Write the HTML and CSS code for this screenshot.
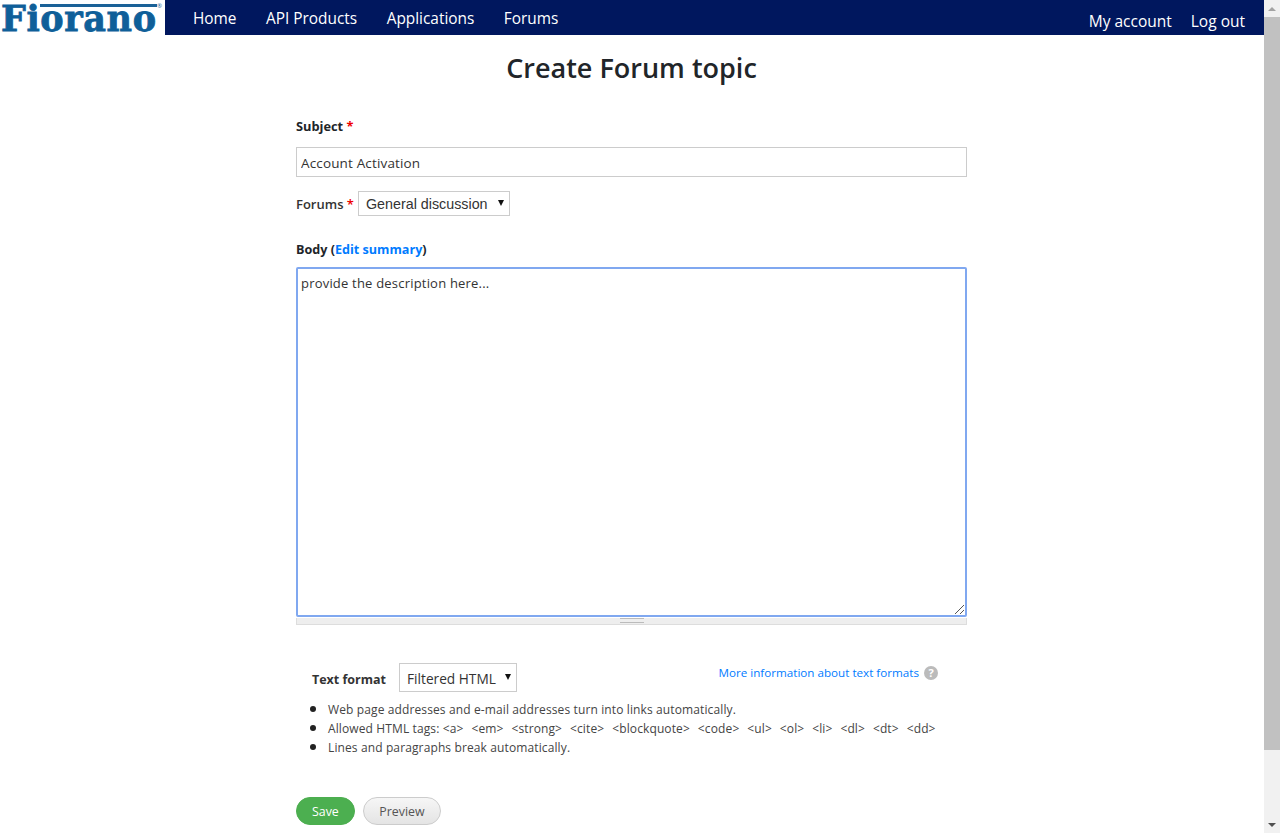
FILE: index.html
```html
<!DOCTYPE html>
<html lang="en">
<head>
  <meta charset="UTF-8" />
  <title>Create Forum topic</title>
  <link rel="stylesheet" href="styles.css">
</head>
<body>
  <div class="page">
    <header class="topbar">
      <a class="logo" href="#">
        <span class="logo-rule"></span>
        <span class="logo-text">Fiorano</span>
        <span class="logo-mark">®</span>
      </a>
      <nav class="main-nav">
        <a href="#">Home</a>
        <a href="#">API Products</a>
        <a href="#">Applications</a>
        <a href="#">Forums</a>
      </nav>
      <nav class="user-nav">
        <a href="#">My account</a>
        <a href="#">Log out</a>
      </nav>
    </header>

    <main class="content">
      <h1>Create Forum topic</h1>
      <form class="topic-form">
        <label class="field-label subject-label" for="subject">Subject <span class="req">*</span></label>
        <input class="text-input" id="subject" type="text" value="Account Activation" />

        <div class="forums-row">
          <label class="forums-label" for="forum">Forums <span class="req">*</span></label>
          <div class="select-box forums-select" id="forum">General discussion<span class="caret"></span></div>
        </div>

        <div class="field-label body-label">Body (<a href="#">Edit summary</a>)</div>
        <div class="body-box">
          <div class="body-text">provide the description here...</div>
          <svg class="resize-corner" width="11" height="11" viewBox="0 0 11 11">
            <path d="M1 10 L10 1 M6 10 L10 6" stroke="#555" stroke-width="1" fill="none" />
          </svg>
        </div>
        <div class="grippie"><span></span></div>

        <div class="format-wrap">
          <div class="format-top">
            <div class="format-pick">
              <span class="format-label">Text format</span>
              <div class="select-box format-select">Filtered HTML<span class="caret"></span></div>
            </div>
            <a class="format-help" href="#">More information about text formats <span class="help-icon">?</span></a>
          </div>
          <ul class="tips">
            <li>Web page addresses and e-mail addresses turn into links automatically.</li>
            <li>Allowed HTML tags: <span class="tag-list">&lt;a&gt; &lt;em&gt; &lt;strong&gt; &lt;cite&gt; &lt;blockquote&gt; &lt;code&gt; &lt;ul&gt; &lt;ol&gt; &lt;li&gt; &lt;dl&gt; &lt;dt&gt; &lt;dd&gt;</span></li>
            <li>Lines and paragraphs break automatically.</li>
          </ul>
        </div>

        <div class="actions">
          <button class="btn btn-save" type="button">Save</button>
          <button class="btn btn-preview" type="button">Preview</button>
        </div>
      </form>
    </main>
  </div>

  <div class="scrollbar">
    <span class="arrow arrow-up"></span>
    <div class="thumb"></div>
    <span class="arrow arrow-down"></span>
  </div>
</body>
</html>
```

FILE: styles.css
```css
html, body {
  height: 100%;
}

body {
  margin: 0;
  display: flex;
  overflow: hidden;
  background: #fff;
  color: #212529;
  font-family: "Open Sans", sans-serif;
  font-size: 13px;
}

a {
  text-decoration: none;
}

.page {
  flex: 1;
  min-width: 0;
}

/* top bar */
.topbar {
  display: flex;
  height: 35px;
  background: #00175e;
}

.logo {
  position: relative;
  display: block;
  width: 165px;
  background: #fff;
}

.logo-rule {
  position: absolute;
  left: 40px;
  top: 4px;
  width: 117px;
  height: 3px;
  background: #1a6197;
}

.logo-text {
  position: absolute;
  left: 1px;
  top: 4px;
  color: #0f5f99;
  font-family: "DejaVu Serif", serif;
  font-size: 35px;
  font-weight: 700;
  line-height: 30px;
  letter-spacing: 0.6px;
  white-space: nowrap;
  -webkit-text-stroke: 0.8px #0f5f99;
}

.logo-mark {
  position: absolute;
  left: 157px;
  top: 2px;
  font-size: 6px;
  color: #1a6197;
}

.main-nav {
  display: flex;
  gap: 29.5px;
  margin-left: 28px;
  padding-top: 7px;
}

.main-nav a,
.user-nav a {
  color: #fff;
  font-size: 15.4px;
  line-height: 24px;
}

.user-nav {
  display: flex;
  gap: 19px;
  margin-left: auto;
  margin-right: 19px;
  padding-top: 9px;
}

.user-nav a {
  font-size: 15.5px;
}

/* form */
.content {
  width: 671px;
  margin-left: 296px;
}

h1 {
  margin: 13px -100px 0;
  text-align: center;
  font-size: 27px;
  font-weight: 600;
  line-height: 40px;
}

.field-label {
  display: block;
  font-weight: 700;
  font-size: 12.8px;
  line-height: 18px;
}

.req {
  color: #e00;
}

.subject-label {
  margin-top: 29px;
}

.text-input {
  display: block;
  box-sizing: border-box;
  width: 100%;
  height: 30px;
  margin-top: 12px;
  padding: 2px 4px 0;
  border: 1px solid #ccc;
  font: 13.5px "Open Sans", sans-serif;
  letter-spacing: 0.15px;
  color: #333;
}

.forums-row {
  display: flex;
  align-items: center;
  margin-top: 14px;
}

.forums-label {
  margin-right: 4px;
  font-weight: 600;
  color: #333;
}

.select-box {
  position: relative;
  box-sizing: border-box;
  border: 1px solid #ccc;
  color: #333;
  white-space: nowrap;
}

.forums-select {
  width: 152px;
  height: 25px;
  padding-left: 7px;
  font-family: "Liberation Sans", sans-serif;
  font-size: 14.3px;
  line-height: 24px;
}

.caret {
  position: absolute;
  top: 8px;
  right: 5px;
  border-left: 3.5px solid transparent;
  border-right: 3.5px solid transparent;
  border-top: 6px solid #111;
}

.body-label {
  margin-top: 25px;
  font-size: 12.6px;
}

.body-label a {
  color: #007bff;
}

.body-box {
  position: relative;
  box-sizing: border-box;
  height: 350px;
  margin-top: 8px;
  padding: 4px 3px;
  border: 2px solid #80a8f0;
  border-radius: 2px;
  line-height: 20px;
  letter-spacing: 0.2px;
  color: #333;
}

.resize-corner {
  position: absolute;
  right: 0;
  bottom: 0;
}

.grippie {
  box-sizing: border-box;
  height: 7px;
  border: 1px solid #ddd;
  border-top: 0;
  background: #eee;
}

.grippie span {
  display: block;
  width: 24px;
  height: 3px;
  margin: 1px auto 0;
  border-top: 1px solid #bbb;
  border-bottom: 1px solid #bbb;
}

.format-wrap {
  margin-top: 38px;
  padding: 0 29px 0 16px;
}

.format-top {
  display: flex;
  justify-content: space-between;
  align-items: flex-start;
}

.format-pick {
  display: flex;
  align-items: center;
  gap: 13px;
}

.format-label {
  padding-top: 3px;
  font-size: 12.5px;
  font-weight: 700;
  color: #333;
}

.format-select {
  width: 118px;
  height: 29px;
  padding-left: 7px;
  font-size: 13.7px;
  line-height: 29px;
}

.format-select .caret {
  top: 10px;
}

.format-help {
  display: flex;
  align-items: center;
  gap: 5px;
  margin-top: 1px;
  color: #007bff;
  font-size: 11.65px;
  line-height: 18px;
}

.help-icon {
  width: 14px;
  height: 14px;
  border-radius: 50%;
  background: #bbb;
  color: #fff;
  font-size: 11px;
  font-weight: 700;
  line-height: 14px;
  text-align: center;
}

.tips {
  margin: 7px 0 0;
  padding-left: 16px;
  font-size: 12px;
  letter-spacing: 0.12px;
  color: #444;
}

.tips li {
  height: 19px;
  line-height: 19px;
}

.tips li::marker {
  font-size: 16px;
  color: #222;
}

.tag-list {
  word-spacing: 4.7px;
}

.actions {
  display: flex;
  gap: 8px;
  margin-top: 41px;
}

.btn {
  height: 28px;
  padding: 0 15px;
  border-radius: 15px;
  font: 12.4px "Open Sans", sans-serif;
  cursor: pointer;
}

.btn-save {
  border: 1px solid #4cae4f;
  background: #4caf50;
  color: #fff;
}

.btn-preview {
  padding: 0 15.5px;
  border: 1px solid #ccc;
  background: linear-gradient(#f6f6f6, #e4e4e4);
  color: #555;
}

/* window scrollbar */
.scrollbar {
  display: flex;
  flex-direction: column;
  flex: none;
  width: 16px;
  height: 100%;
  background: #f1f1f1;
}

.thumb {
  height: 733px;
  background: #c1c1c1;
}

.arrow {
  display: flex;
  flex: none;
  justify-content: center;
  height: 17px;
  box-sizing: border-box;
}

.arrow::before {
  content: "";
  align-self: center;
  border-left: 4px solid transparent;
  border-right: 4px solid transparent;
}

.arrow-up::before {
  border-bottom: 4px solid #a3a3a3;
}

.arrow-down {
  margin-top: auto;
}

.arrow-down::before {
  border-top: 4px solid #505050;
}
```
